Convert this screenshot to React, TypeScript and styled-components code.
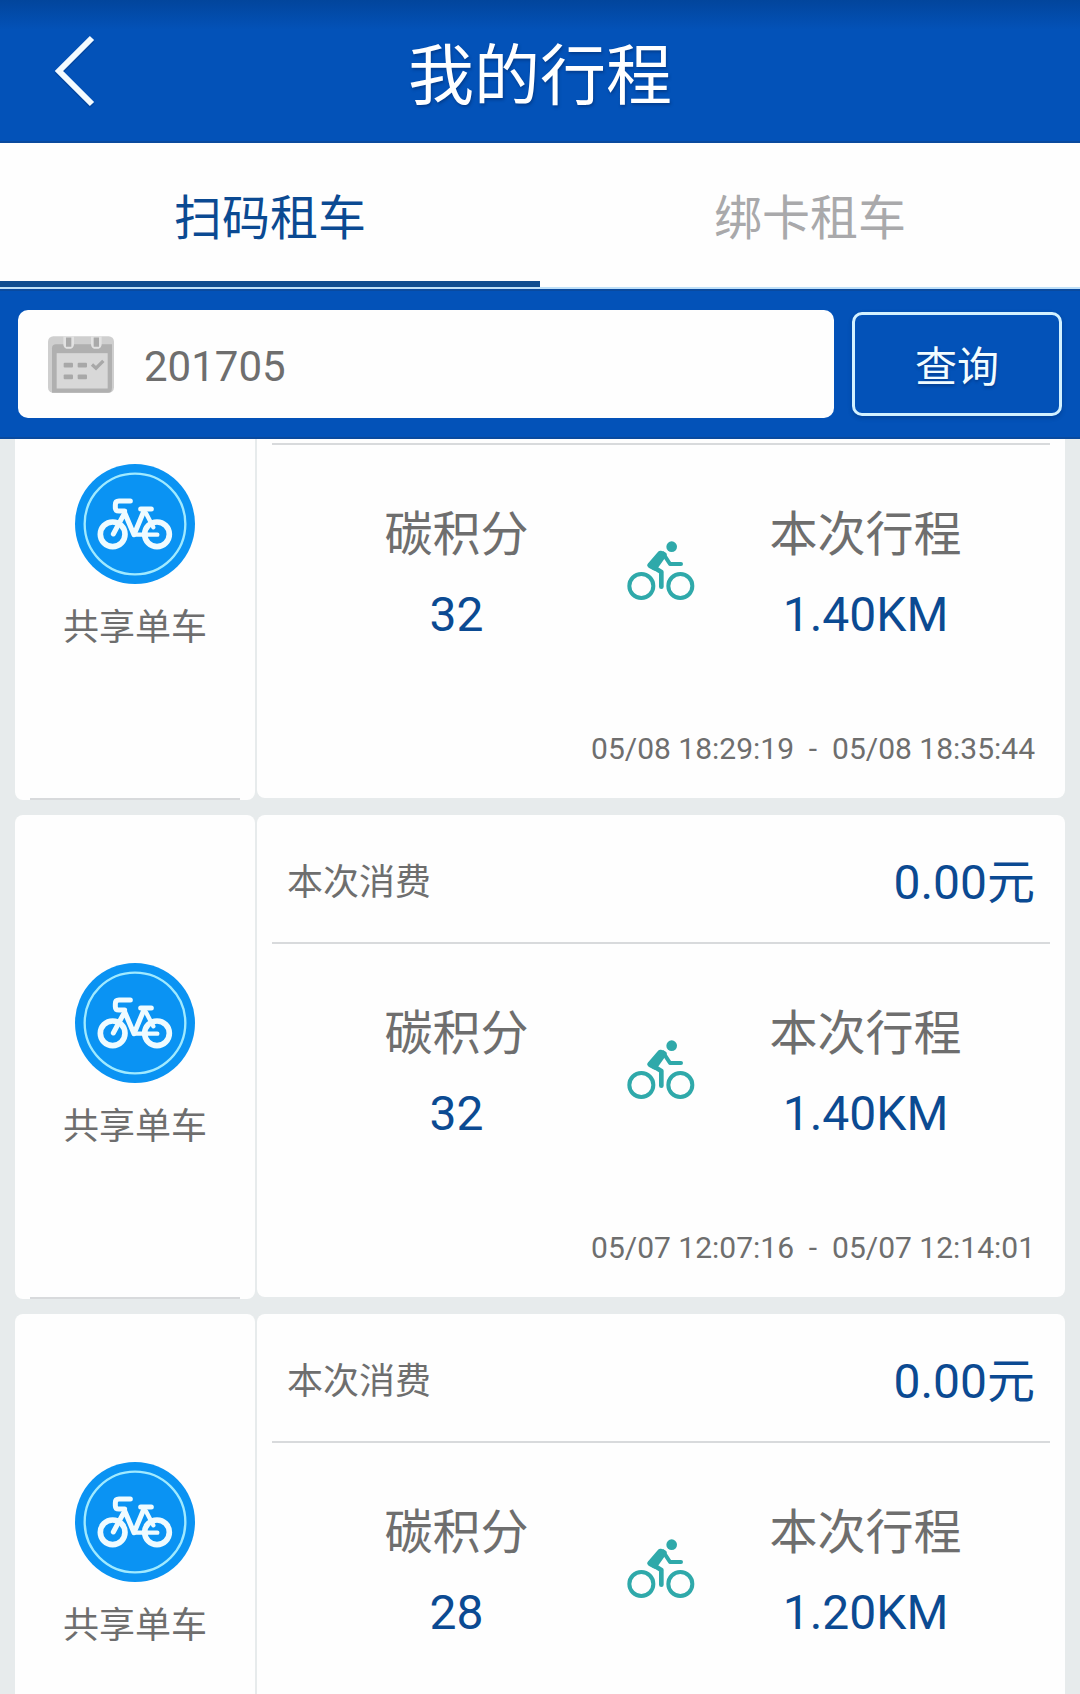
import React, { useState } from "react";
import styled, { createGlobalStyle } from "styled-components";

const blue = "#0352b8";
const navy = "#0b4a92";
const grey = "#6e6e6e";
const line = "#d8dadc";

const GlobalStyle = createGlobalStyle`
  *, *::before, *::after { box-sizing: border-box; }
  body {
    margin: 0;
    background: #e7ebec;
    font-family: Roboto, "Noto Sans CJK SC", sans-serif;
  }
  button, input { font-family: inherit; }
  h1, p, ul, dl, dd { margin: 0; padding: 0; }
`;

const Page = styled.div`
  display: flex;
  flex-direction: column;
  height: 100vh;
  overflow: hidden;
`;

const Header = styled.header`
  display: grid;
  grid-template-columns: 140px 1fr 140px;
  align-items: center;
  flex: none;
  height: 143px;
  background: linear-gradient(#02459c, ${blue} 30px);
  border-bottom: 2px solid #0a4a9e;
`;

const BackButton = styled.button`
  display: flex;
  justify-content: center;
  padding: 0 0 0 10px;
  border: 0;
  background: none;
  cursor: pointer;
`;

const Title = styled.h1`
  padding-top: 12px;
  color: #fff;
  font-size: 66px;
  font-weight: 400;
  line-height: 96px;
  text-align: center;
  text-shadow: 1px 2px 3px rgba(0, 30, 80, 0.4);
`;

const Tabs = styled.div`
  display: grid;
  grid-template-columns: 1fr 1fr;
  flex: none;
  height: 146px;
  background: #fefefe;
  border-bottom: 2px solid #bfe0f8;
`;

const Tab = styled.button<{ $active: boolean }>`
  padding: 14px 0 0;
  border: 0;
  border-bottom: 6px solid ${(p) => (p.$active ? "#104d90" : "transparent")};
  background: none;
  color: ${(p) => (p.$active ? navy : "#a9a9ab")};
  font-size: 48px;
  line-height: 64px;
  cursor: pointer;
`;

const SearchBar = styled.form`
  display: flex;
  align-items: center;
  gap: 18px;
  flex: none;
  height: 150px;
  padding: 0 18px;
  background: ${blue};
  border-top: 2px solid #0a4a9e;
  border-bottom: 2px solid #0a4a9e;
`;

const MonthField = styled.label`
  display: flex;
  align-items: center;
  gap: 30px;
  flex: 1;
  min-width: 0;
  height: 108px;
  padding: 0 30px;
  border-radius: 10px;
  background: #fefefe;
`;

const MonthInput = styled.input`
  flex: 1;
  min-width: 0;
  padding: 6px 0 0;
  border: 0;
  outline: 0;
  background: none;
  color: ${grey};
  font-size: 42px;
  line-height: 56px;
`;

const QueryButton = styled.button`
  width: 210px;
  height: 104px;
  padding: 8px 0 0;
  border: 3px solid #d3f1ff;
  border-radius: 10px;
  background: none;
  color: #f2fcff;
  font-size: 42px;
  line-height: 56px;
  box-shadow: 0 2px 4px rgba(0, 30, 80, 0.3);
  text-shadow: 0 2px 3px rgba(0, 30, 80, 0.4);
  cursor: pointer;
`;

const TripList = styled.ul`
  display: flex;
  flex-direction: column;
  gap: 15px;
  flex: 1;
  min-height: 0;
  padding: 0 15px;
  overflow-y: auto;
  list-style: none;
  scrollbar-width: none;
`;

const TripRow = styled.li`
  display: grid;
  grid-template-columns: 240px 1fr;
  gap: 2px;
  flex: none;
`;

const panelRadius = (open: boolean) => (open ? "0 0 8px 8px" : "8px");

const Vehicle = styled.div<{ $open: boolean }>`
  display: flex;
  flex-direction: column;
  align-items: center;
  justify-content: flex-end;
  gap: 20px;
  padding: 0 15px;
  border-radius: ${(p) => panelRadius(p.$open)};
  background: #fefefe;
`;

const VehicleName = styled.p`
  align-self: stretch;
  padding-bottom: 146px;
  border-bottom: 2px solid ${line};
  color: ${grey};
  font-size: 36px;
  line-height: 48px;
  text-align: center;
`;

const Detail = styled.div<{ $open: boolean }>`
  margin-bottom: 2px;
  padding: ${(p) => (p.$open ? "4px 15px 0" : "0 15px")};
  border-radius: ${(p) => panelRadius(p.$open)};
  background: #fefefe;
`;

const Cost = styled.div`
  display: flex;
  align-items: center;
  justify-content: space-between;
  height: 127px;
  padding: 8px 15px 0;
`;

const CostLabel = styled.span`
  color: ${grey};
  font-size: 36px;
  line-height: 48px;
`;

const CostValue = styled.span`
  color: ${navy};
  font-size: 48px;
  line-height: 64px;
`;

const Stats = styled.dl`
  display: grid;
  grid-template-columns: 1fr 68px 1fr;
  align-items: center;
  padding: 58px 14px 0;
  border-top: 2px solid ${line};
`;

const Stat = styled.div`
  display: flex;
  flex-direction: column;
  gap: 16px;
  font-size: 48px;
  line-height: 64px;
  text-align: center;
`;

const StatName = styled.dt`
  color: ${grey};
`;

const StatValue = styled.dd`
  color: ${navy};
`;

const Rider = styled.div`
  display: flex;
  padding-bottom: 8px;
`;

const Period = styled.p`
  height: 151px;
  padding: 84px 15px 31px;
  color: ${grey};
  font-size: 30px;
  line-height: 36px;
  text-align: right;
  white-space: pre;
`;

const BackIcon = () => (
  <svg width="44" height="76" viewBox="0 0 44 76" fill="none" aria-hidden="true">
    <path d="M39 7 6 40l33 33" stroke="#013a8a" strokeWidth="6" opacity=".5" />
    <path d="M39 5 6 38l33 33" stroke="#f4fbff" strokeWidth="6" />
  </svg>
);

const CalendarIcon = () => (
  <svg width="66" height="57" viewBox="144 200 198 170" aria-hidden="true">
    <rect x="144" y="200" width="198" height="170" rx="16" fill="#cfcfcf" />
    <path d="M156 236q0-12 12-12h168v130q0 16-12 16H156z" fill="#b0b0b0" />
    <rect x="170" y="251" width="153" height="106" fill="#d8d8d8" />
    <path d="M190 200h32v24q0 14-16 14t-16-14zM273 200h32v24q0 14-16 14t-16-14z" fill="#e2e2e2" />
    <path d="M198 204h16v28h-16zM281 204h16v28h-16z" fill="#aaa" />
    <g fill="#a8a8a8">
      <rect x="191" y="280" width="28" height="14" rx="3" />
      <rect x="233" y="280" width="28" height="14" rx="3" />
      <rect x="191" y="315" width="28" height="14" rx="3" />
      <rect x="233" y="315" width="28" height="14" rx="3" />
    </g>
    <path d="m276 285 12 11 22-22" fill="none" stroke="#a8a8a8" strokeWidth="10" />
  </svg>
);

const BikeBadge = () => (
  <svg width="120" height="120" viewBox="45 42 360 360" fill="none" aria-hidden="true">
    <circle cx="225" cy="222" r="180" fill="#0a93f3" />
    <circle cx="225" cy="222" r="151" stroke="#a0eaff" strokeWidth="7" />
    <g stroke="#effbff" strokeLinecap="round" strokeLinejoin="round">
      <circle cx="158" cy="253" r="37" strokeWidth="17" />
      <circle cx="291" cy="253" r="37" strokeWidth="17" />
      <path d="M211 153h-34q-11 0-11 11v9q0 10 11 10h17" strokeWidth="15" />
      <path d="m193 186 29 68 30-72M190 196l-30 56" strokeWidth="15" />
      <path d="M242 177h32" strokeWidth="15" />
      <path d="M224 254h68M258 190l22 42" strokeWidth="13" />
    </g>
  </svg>
);

const RiderIcon = () => (
  <svg width="68" height="60" viewBox="80 61 204 180" fill="none" aria-hidden="true">
    <g stroke="#2fa9aa" strokeLinecap="round" strokeLinejoin="round">
      <circle cx="123" cy="196" r="36" strokeWidth="12" />
      <circle cx="240" cy="196" r="36" strokeWidth="12" />
      <path d="m188 98 21 32h33" strokeWidth="12" />
      <path d="m150 134 33 20v44" strokeWidth="14" />
      <path d="m180 98-31 36 14 8 28-40z" fill="#2fa9aa" strokeWidth="16" />
      <circle cx="214" cy="78" r="16" fill="#2fa9aa" stroke="none" />
    </g>
  </svg>
);

type TripData = { cost?: string; points: string; distance: string; period?: string };

const trips: TripData[] = [
  { points: "32", distance: "1.40KM", period: "05/08 18:29:19  -  05/08 18:35:44" },
  { cost: "0.00元", points: "32", distance: "1.40KM", period: "05/07 12:07:16  -  05/07 12:14:01" },
  { cost: "0.00元", points: "28", distance: "1.20KM" },
];

function Trip({ cost, points, distance, period }: TripData) {
  const open = !cost;
  return (
    <TripRow>
      <Vehicle $open={open}>
        <BikeBadge />
        <VehicleName>共享单车</VehicleName>
      </Vehicle>
      <Detail $open={open}>
        {cost && (
          <Cost>
            <CostLabel>本次消费</CostLabel>
            <CostValue>{cost}</CostValue>
          </Cost>
        )}
        <Stats>
          <Stat>
            <StatName>碳积分</StatName>
            <StatValue>{points}</StatValue>
          </Stat>
          <Rider>
            <RiderIcon />
          </Rider>
          <Stat>
            <StatName>本次行程</StatName>
            <StatValue>{distance}</StatValue>
          </Stat>
        </Stats>
        <Period>{period}</Period>
      </Detail>
    </TripRow>
  );
}

export default function App() {
  const [tab, setTab] = useState(0);
  const [month, setMonth] = useState("201705");

  return (
    <Page>
      <GlobalStyle />
      <Header>
        <BackButton type="button" aria-label="返回">
          <BackIcon />
        </BackButton>
        <Title>我的行程</Title>
      </Header>
      <Tabs role="tablist">
        {["扫码租车", "绑卡租车"].map((name, i) => (
          <Tab
            key={name}
            type="button"
            role="tab"
            aria-selected={tab === i}
            $active={tab === i}
            onClick={() => setTab(i)}
          >
            {name}
          </Tab>
        ))}
      </Tabs>
      <SearchBar onSubmit={(e) => e.preventDefault()}>
        <MonthField>
          <CalendarIcon />
          <MonthInput
            type="text"
            inputMode="numeric"
            aria-label="月份"
            value={month}
            onChange={(e) => setMonth(e.target.value)}
          />
        </MonthField>
        <QueryButton type="submit">查询</QueryButton>
      </SearchBar>
      <TripList>
        {trips.map((trip, i) => (
          <Trip key={i} {...trip} />
        ))}
      </TripList>
    </Page>
  );
}
